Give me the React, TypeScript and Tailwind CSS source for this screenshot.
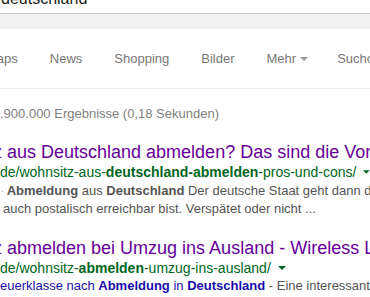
import React from "react";

function Cut({ text, className }: { text: string; className: string }) {
    // shows only the tail of a word that runs off the left edge
    return (
        <span className={`inline-flex justify-end overflow-hidden whitespace-nowrap align-top ${className}`}>
            <span className="shrink-0">{text}</span>
        </span>
    );
}

function Caret({ className }: { className: string }) {
    return (
        <svg width="8" height="4" viewBox="0 0 8 4" className={className}>
            <path d="M0 0 L8 0 L4 4 Z" fill="currentColor" />
        </svg>
    );
}

const tabs = ["Maps", "News", "Shopping", "Bilder"];

export default function App() {
    return (
        <div
            className="w-[370px] h-[297px] overflow-hidden bg-white"
            style={{ fontFamily: '"Liberation Sans", Arial, sans-serif' }}
        >
            {/* search box remainder */}
            <div className="h-[14px] border-b border-[#c8c8c8] overflow-hidden">
                <div className="-mt-[9px] ml-[1px] text-[16px] leading-[16px] text-[#222]">deutschland</div>
            </div>
            <div className="h-[15px] bg-[#f1f1f1]" />

            {/* tabs */}
            <div className="h-[60px] border-b border-[#ebebeb] flex items-center whitespace-nowrap text-[13px] text-[#777] -ml-[14px]">
                <div className="flex items-center gap-[32px]">
                    {tabs.map((t) => (
                        <span key={t}>{t}</span>
                    ))}
                    <span className="flex items-center">
                        Mehr
                        <Caret className="ml-[4px] text-[#999]" />
                    </span>
                </div>
                <span className="ml-[29px]">Suchoptionen</span>
            </div>

            <div className="whitespace-nowrap">
                <div className="mt-[16px] text-[13px] leading-[18px] text-[#808080]">
                    .900.000 Ergebnisse (0,18 Sekunden)
                </div>

                {/* result 1 */}
                <div className="mt-[19px]">
                    <div className="text-[18px] leading-[21px] text-[#660099]">
                        <Cut text="Wohnsitz" className="w-[2px]" /> aus Deutschland abmelden? Das sind die Vor- und Nachteile
                    </div>
                    <div className="flex items-center text-[14px] leading-[18px] text-[#006621]">
                        <span>
                            de/wohnsitz-aus-<b>deutschland-abmelden</b>-pros-und-cons/
                        </span>
                        <Caret className="ml-[7px]" />
                    </div>
                    <div className="mt-[1px] text-[13px] leading-[18px] text-[#545454]">
                        <div className="ml-[2px]">
                            <Cut text="-" className="w-[1px]" />{" "}
                            <b>Abmeldung</b> aus <b>Deutschland</b> Der deutsche Staat geht dann davon aus
                        </div>
                        <div className="ml-[3px]">auch postalisch erreichbar bist. Verspätet oder nicht ...</div>
                    </div>
                </div>

                {/* result 2 */}
                <div className="mt-[20px]">
                    <div className="text-[18px] leading-[21px] text-[#660099]">
                        <Cut text="Wohnsitz" className="w-[2px]" /> abmelden bei Umzug ins Ausland - Wireless Life
                    </div>
                    <div className="flex items-center text-[14px] leading-[18px] text-[#006621]">
                        <span>
                            de/wohnsitz-<b>abmelden</b>-umzug-ins-ausland/
                        </span>
                        <Caret className="ml-[7px]" />
                    </div>
                    <div className="text-[13px] leading-[18px] text-[#545454]">
                        <span className="text-[#1a0dab]">
                            euerklasse nach <b>Abmeldung</b> in <b>Deutschland</b>
                        </span>{" "}
                        - Eine interessante Frage
                    </div>
                </div>
            </div>
        </div>
    );
}
